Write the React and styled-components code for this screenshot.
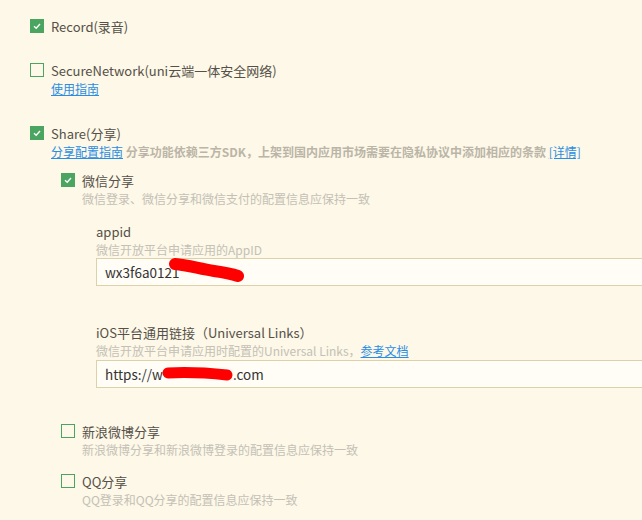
import React from "react";
import styled, { createGlobalStyle } from "styled-components";

const GlobalStyle = createGlobalStyle`
  html, body {
    margin: 0;
    padding: 0;
    background: #fdf8e7;
    overflow: hidden;
  }
  body {
    font-family: "Microsoft YaHei", "Noto Sans CJK SC", "Noto Sans", sans-serif;
    color: #555049;
  }
`;

const Page = styled.div`
  display: flex;
  flex-direction: column;
  padding: 16px 0 0 30px;
  width: 642px;
  height: 520px;
  box-sizing: border-box;
`;

const Module = styled.div`
  display: flex;
  flex-direction: column;
  margin-top: ${(p) => p.$gap || 0}px;
  margin-left: ${(p) => p.$indent || 0}px;
`;

const Row = styled.label`
  display: flex;
  align-items: center;
  gap: 7px;
  height: 20px;
  font-size: 13px;
  color: #555049;
  white-space: nowrap;
`;

const Box = styled.span`
  width: 14px;
  height: 14px;
  box-sizing: border-box;
  flex: none;
  display: flex;
  align-items: center;
  justify-content: center;
  background: ${(p) => (p.$on ? "#4aa561" : "transparent")};
  border: 1px solid #4aa561;
`;

const Desc = styled.div`
  margin-left: 21px;
  font-size: 12px;
  line-height: 18px;
  color: ${(p) => (p.$strong ? "#bbb5a8" : "#c4c0b6")};
  font-weight: ${(p) => (p.$strong ? 600 : 400)};
  white-space: nowrap;
`;

const Link = styled.a`
  color: #2a8de4;
  text-decoration: underline;
  font-weight: 400;
  cursor: pointer;
`;

const Field = styled.div`
  display: flex;
  flex-direction: column;
  margin-top: ${(p) => p.$gap || 0}px;
  margin-left: 35px;
`;

const FieldLabel = styled.div`
  font-size: 13px;
  line-height: 18px;
  color: #555049;
  white-space: nowrap;
`;

const FieldHint = styled.div`
  font-size: 12px;
  line-height: 17px;
  color: #c4c0b6;
  white-space: nowrap;
`;

const InputWrap = styled.div`
  position: relative;
  margin-top: ${(p) => p.$gap || 0}px;
`;

const Input = styled.div`
  width: 620px;
  height: 28px;
  box-sizing: border-box;
  border: 1px solid #ddd1a9;
  background: #fffdf6;
  padding: 0 8px;
  display: flex;
  align-items: center;
  font-size: 13.5px;
  color: #333;
  overflow: hidden;
  white-space: nowrap;
`;

const Hidden = styled.span`
  display: inline-block;
  width: ${(p) => p.$w}px;
`;

const Scribble = styled.svg`
  position: absolute;
  left: 0;
  top: 0;
  pointer-events: none;
`;

const Check = ({ on }) => (
  <Box $on={on}>
    {on && (
      <svg width="10" height="10" viewBox="0 0 10 10">
        <path d="M2 5.2 L4.2 7.2 L8 3" fill="none" stroke="#fff" strokeWidth="1.4" />
      </svg>
    )}
  </Box>
);

export default function App() {
  return (
    <>
      <GlobalStyle />
      <Page>
        <Module>
          <Row>
            <Check on />
            Record(录音)
          </Row>
        </Module>

        <Module $gap={24}>
          <Row>
            <Check />
            SecureNetwork(uni云端一体安全网络)
          </Row>
          <Desc>
            <Link>使用指南</Link>
          </Desc>
        </Module>

        <Module $gap={25}>
          <Row>
            <Check on />
            Share(分享)
          </Row>
          <Desc $strong>
            <Link>分享配置指南</Link> 分享功能依赖三方SDK，上架到国内应用市场需要在隐私协议中添加相应的条款 <Link>[详情]</Link>
          </Desc>

          <Module $gap={9} $indent={31}>
            <Row>
              <Check on />
              微信分享
            </Row>
            <Desc>微信登录、微信分享和微信支付的配置信息应保持一致</Desc>

            <Field $gap={15}>
              <FieldLabel>appid</FieldLabel>
              <FieldHint>微信开放平台申请应用的AppID</FieldHint>
              <InputWrap>
                <Input>wx3f6a0121<Hidden $w={60} /></Input>
                <Scribble width="200" height="28">
                  <path
                    d="M79 6 C 92 7, 104 11, 118 13 S 136 16, 142 18"
                    fill="none"
                    stroke="#ff0000"
                    strokeWidth="12"
                    strokeLinecap="round"
                  />
                </Scribble>
              </InputWrap>
            </Field>

            <Field $gap={38}>
              <FieldLabel>iOS平台通用链接（Universal Links）</FieldLabel>
              <FieldHint>
                微信开放平台申请应用时配置的Universal Links，<Link>参考文档</Link>
              </FieldHint>
              <InputWrap $gap={1}>
                <Input>
                  https://w<Hidden $w={70} />.com
                </Input>
                <Scribble width="200" height="28">
                  <path
                    d="M72 13 C 90 12, 112 13, 131 15"
                    fill="none"
                    stroke="#ff0000"
                    strokeWidth="11"
                    strokeLinecap="round"
                  />
                </Scribble>
              </InputWrap>
            </Field>
          </Module>

          <Module $gap={33} $indent={31}>
            <Row>
              <Check />
              新浪微博分享
            </Row>
            <Desc>新浪微博分享和新浪微博登录的配置信息应保持一致</Desc>
          </Module>

          <Module $gap={12} $indent={31}>
            <Row>
              <Check />
              QQ分享
            </Row>
            <Desc>QQ登录和QQ分享的配置信息应保持一致</Desc>
          </Module>
        </Module>
      </Page>
    </>
  );
}
